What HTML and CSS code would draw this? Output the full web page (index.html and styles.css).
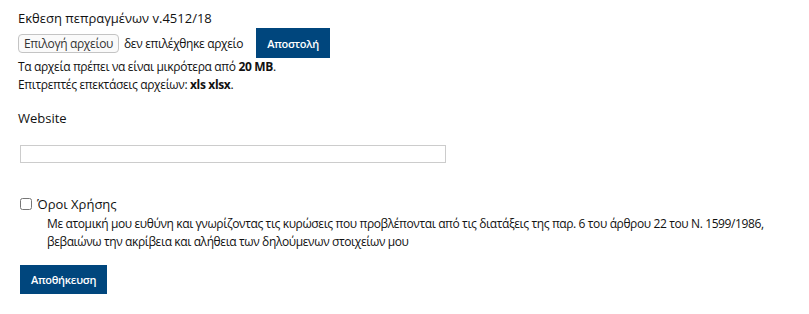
FILE: index.html
```html
<!DOCTYPE html>
<html lang="el">
<head>
    <meta charset="UTF-8">
    <meta name="viewport" content="width=device-width, initial-scale=1.0">
    <title>Εκθεση πεπραγμένων</title>
    <link rel="stylesheet" href="styles.css">
</head>
<body>
    <form class="report-form">
        <div class="upload-block">
            <label class="field-title">Εκθεση πεπραγμένων v.4512/18</label>
            <div class="upload-row">
                <label class="file-pick">
                    <span class="file-btn">Επιλογή αρχείου</span>
                    <span class="file-name">δεν επιλέχθηκε αρχείο</span>
                </label>
                <button type="button" class="btn">Αποστολή</button>
            </div>
            <p class="hint">Τα αρχεία πρέπει να είναι μικρότερα από <strong>20 MB</strong>.</p>
            <p class="hint">Επιτρεπτές επεκτάσεις αρχείων: <strong>xls xlsx</strong>.</p>
        </div>

        <div class="website-block">
            <label for="website" class="field-title">Website</label>
            <input type="text" id="website" class="text-input">
        </div>

        <div class="terms-block">
            <label class="terms-label">
                <input type="checkbox" class="terms-check">
                <span>Όροι Χρήσης</span>
            </label>
            <p class="terms-text">Με ατομική μου ευθύνη και γνωρίζοντας τις κυρώσεις που προβλέπονται από τις διατάξεις της παρ. 6 του άρθρου 22 του Ν. 1599/1986,<br>βεβαιώνω την ακρίβεια και αλήθεια των δηλούμενων στοιχείων μου</p>
        </div>

        <button type="submit" class="btn btn-save">Αποθήκευση</button>
    </form>
</body>
</html>
```

FILE: styles.css
```css
body {
    margin: 0;
    font-family: "Open Sans", "Noto Sans", sans-serif;
    color: #111;
    background: #fff;
}
.report-form {
    padding: 8px 18px 18px;
}
.field-title {
    display: block;
    font-size: 13px;
    line-height: 20px;
}
.upload-row {
    display: flex;
    align-items: center;
    margin-top: 0;
}
.file-pick {
    display: flex;
    align-items: center;
    font-size: 12px;
    letter-spacing: -0.35px;
}
.file-btn {
    padding: 1px 5px;
    border: 1px solid #c4c4c4;
    border-radius: 4px;
    background: #fafafa;
    line-height: 15px;
    color: #333;
}
.file-name {
    margin-left: 5px;
}
.btn {
    font-family: inherit;
    font-size: 11px;
    font-weight: 600;
    letter-spacing: -0.3px;
    color: #fff;
    background-color: #00467d;
    border: none;
    border-radius: 0;
    height: 30px;
    padding: 0 11px;
    cursor: pointer;
}
.upload-row .btn {
    margin-left: 13px;
}
.hint {
    margin: 0;
    font-size: 12px;
    line-height: 18px;
    letter-spacing: -0.35px;
}
.website-block {
    margin-top: 14px;
}
.text-input {
    display: block;
    margin: 17px 0 0 2px;
    width: 426px;
    height: 18px;
    box-sizing: border-box;
    border: 1px solid #ccc;
    border-radius: 0;
    padding: 2px 4px;
}
.terms-block {
    margin-top: 31px;
}
.terms-label {
    display: flex;
    align-items: center;
    font-size: 13px;
    line-height: 20px;
}
.terms-check {
    margin: 0 5px 0 2px;
    width: 12px;
    height: 12px;
}
.terms-text {
    margin: 1px 0 0 29px;
    font-size: 12px;
    line-height: 18px;
    letter-spacing: -0.38px;
}
.btn-save {
    margin: 14px 0 0 2px;
    height: 29px;
    padding: 0 11px;
}
```
